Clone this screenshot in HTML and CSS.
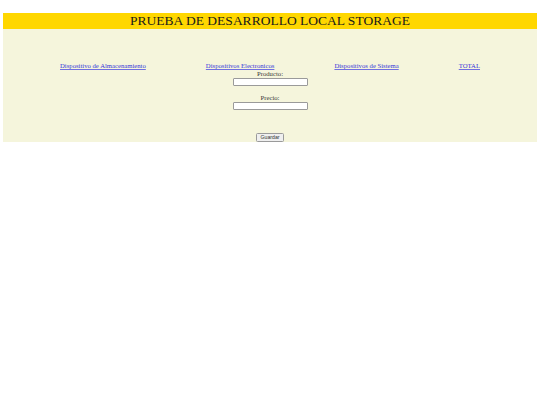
FILE: index.html
```html
<!DOCTYPE html>
<html lang="es">
<head>
<meta charset="utf-8">
<title>Local Storage</title>
<link rel="stylesheet" href="styles.css">
</head>
<body>
<div class="page">
  <header class="header">
    <h1 class="title">PRUEBA DE DESARROLLO LOCAL STORAGE</h1>
  </header>
  <main class="main">
    <nav class="links">
      <a href="#" class="link">Dispositivo de Almacenamiento</a>
      <a href="#" class="link">Dispositivos Electronicos</a>
      <a href="#" class="link">Dispositivos de Sistema</a>
      <a href="#" class="link">TOTAL</a>
    </nav>
    <form class="form">
      <label class="label">Producto:</label>
      <input class="field" type="text">
      <label class="label label-second">Precio:</label>
      <input class="field" type="text">
      <button class="btn" type="button">Guardar</button>
    </form>
  </main>
</div>
</body>
</html>
```

FILE: styles.css
```css
html, body {
  margin: 0;
  padding: 0;
  background: #ffffff;
}
.page {
  padding: 13px 3px 0 3px;
  font-family: "Liberation Serif", "Times New Roman", serif;
}
.header {
  background: #ffd700;
  height: 16px;
  display: flex;
  align-items: center;
  justify-content: center;
}
.title {
  margin: 0;
  font-weight: normal;
  font-size: 13.5px;
  line-height: 16px;
  color: #1a1a1a;
}
.main {
  background: #f5f5dc;
  height: 113px;
  padding-top: 33px;
  box-sizing: border-box;
  display: flex;
  flex-direction: column;
}
.links {
  display: flex;
  justify-content: space-between;
  padding: 0 57px;
  height: 8px;
}
.link {
  font-size: 6.7px;
  line-height: 8px;
  color: #3535d8;
  text-decoration: underline;
  text-decoration-color: #7070e0;
}
.form {
  display: flex;
  flex-direction: column;
  align-items: center;
}
.label {
  font-size: 6.7px;
  line-height: 8px;
  color: #3a3a3a;
}
.label-second {
  margin-top: 8px;
}
.field {
  box-sizing: border-box;
  width: 75px;
  height: 8px;
  margin: 0;
  padding: 0;
  border: 1px solid #9a9a9a;
  border-radius: 1px;
  background: #fff;
  font-size: 5px;
}
.btn {
  box-sizing: border-box;
  margin-top: 23px;
  width: 28px;
  height: 8.5px;
  padding: 0;
  border: 1px solid #9a9a9a;
  border-radius: 1.5px;
  background: #efefef;
  font-family: "Liberation Sans", Arial, sans-serif;
  font-size: 5.2px;
  line-height: 6px;
  color: #333;
}
```
